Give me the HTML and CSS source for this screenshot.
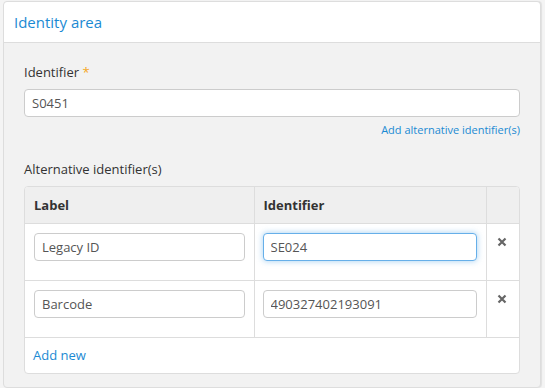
FILE: index.html
```html
<!DOCTYPE html>
<html lang="en">
<head>
    <meta charset="UTF-8">
    <title>Identity area</title>
    <link rel="stylesheet" href="styles.css">
</head>
<body>
    <section class="panel">
        <h2 class="panel-title">Identity area</h2>
        <div class="panel-body">
            <div class="field">
                <label class="field-label" for="identifier">Identifier <span class="required">*</span></label>
                <input class="text-input" id="identifier" type="text" value="S0451">
                <div class="field-help">
                    <a href="#" class="link small-link">Add alternative identifier(s)</a>
                </div>
            </div>

            <div class="field">
                <div class="field-label">Alternative identifier(s)</div>
                <div class="table-wrap">
                    <table class="multi-row">
                        <thead>
                            <tr>
                                <th class="col-label">Label</th>
                                <th class="col-ident">Identifier</th>
                                <th class="col-remove"></th>
                            </tr>
                        </thead>
                        <tbody>
                            <tr>
                                <td><input class="text-input" type="text" value="Legacy ID"></td>
                                <td><input class="text-input focused" type="text" value="SE024"></td>
                                <td class="remove-cell">
                                    <svg class="remove-icon" width="10" height="10" viewBox="0 0 10 10">
                                        <path d="M1.5 1.5 L8.5 8.5 M8.5 1.5 L1.5 8.5" stroke="#666" stroke-width="2.2"/>
                                    </svg>
                                </td>
                            </tr>
                            <tr>
                                <td><input class="text-input" type="text" value="Barcode"></td>
                                <td><input class="text-input" type="text" value="490327402193091"></td>
                                <td class="remove-cell">
                                    <svg class="remove-icon" width="10" height="10" viewBox="0 0 10 10">
                                        <path d="M1.5 1.5 L8.5 8.5 M8.5 1.5 L1.5 8.5" stroke="#666" stroke-width="2.2"/>
                                    </svg>
                                </td>
                            </tr>
                        </tbody>
                        <tfoot>
                            <tr>
                                <td colspan="3" class="add-cell"><a href="#" class="link">Add new</a></td>
                            </tr>
                        </tfoot>
                    </table>
                </div>
            </div>
        </div>
    </section>
</body>
</html>
```

FILE: styles.css
```css
* {
    margin: 0;
    padding: 0;
    box-sizing: border-box;
}

body {
    background-color: #f4f4f4;
    font-family: 'Open Sans', 'Liberation Sans', sans-serif;
    font-size: 13px;
    color: #333;
    padding: 1px 4px 0 3px;
    height: 388px;
    overflow: hidden;
}

.panel {
    background-color: #f2f2f2;
    border: 1px solid #ddd;
    border-radius: 4px;
    box-shadow: 1px 0 1px rgba(0, 0, 0, 0.08);
    min-height: 387px;
}

.panel-title {
    background-color: #fff;
    border-bottom: 1px solid #ddd;
    border-radius: 4px 4px 0 0;
    font-size: 15px;
    font-weight: normal;
    color: #1b8ad3;
    height: 41px;
    line-height: 40px;
    padding-left: 10px;
}

.panel-body {
    padding: 20px 20px 0 20px;
}

.field-label {
    display: block;
    line-height: 18px;
    margin-bottom: 8px;
}

.required {
    color: #f5a623;
}

.text-input {
    display: block;
    width: 100%;
    height: 28px;
    padding: 0 7px;
    font-family: inherit;
    font-size: 13px;
    color: #555;
    background-color: #fff;
    border: 1px solid #ccc;
    border-radius: 4px;
    outline: none;
}

.text-input.focused {
    border-color: #66afe9;
    box-shadow: 0 0 6px rgba(102, 175, 233, 0.6);
}

.field-help {
    text-align: right;
    line-height: 14px;
    margin-top: 5px;
    margin-bottom: 23px;
}

.link {
    color: #1b8ad3;
    text-decoration: none;
}

.small-link {
    font-size: 11px;
}

.table-wrap {
    background-color: #fff;
    border: 1px solid #ddd;
    border-radius: 4px;
    overflow: hidden;
}

.multi-row {
    width: 100%;
    border-collapse: collapse;
    table-layout: fixed;
}

.multi-row th {
    background-color: #efefef;
    text-align: left;
    font-weight: bold;
    color: #333;
    height: 36px;
    padding: 0 9px;
    border-bottom: 1px solid #ddd;
}

.multi-row th + th,
.multi-row tbody td + td {
    border-left: 1px solid #ddd;
}

.col-label {
    width: 229px;
}

.col-ident {
    width: 232px;
}

.multi-row tbody td {
    vertical-align: top;
    padding: 9px 9px 19px 8px;
    height: 57px;
    border-bottom: 1px solid #ddd;
}

.multi-row tbody td:first-child {
    padding-left: 9px;
}

.remove-cell {
    text-align: center;
}

.remove-icon {
    display: inline-block;
    margin-top: 4px;
}

.add-cell {
    height: 36px;
    padding: 0 8px;
    font-size: 13px;
}
```
